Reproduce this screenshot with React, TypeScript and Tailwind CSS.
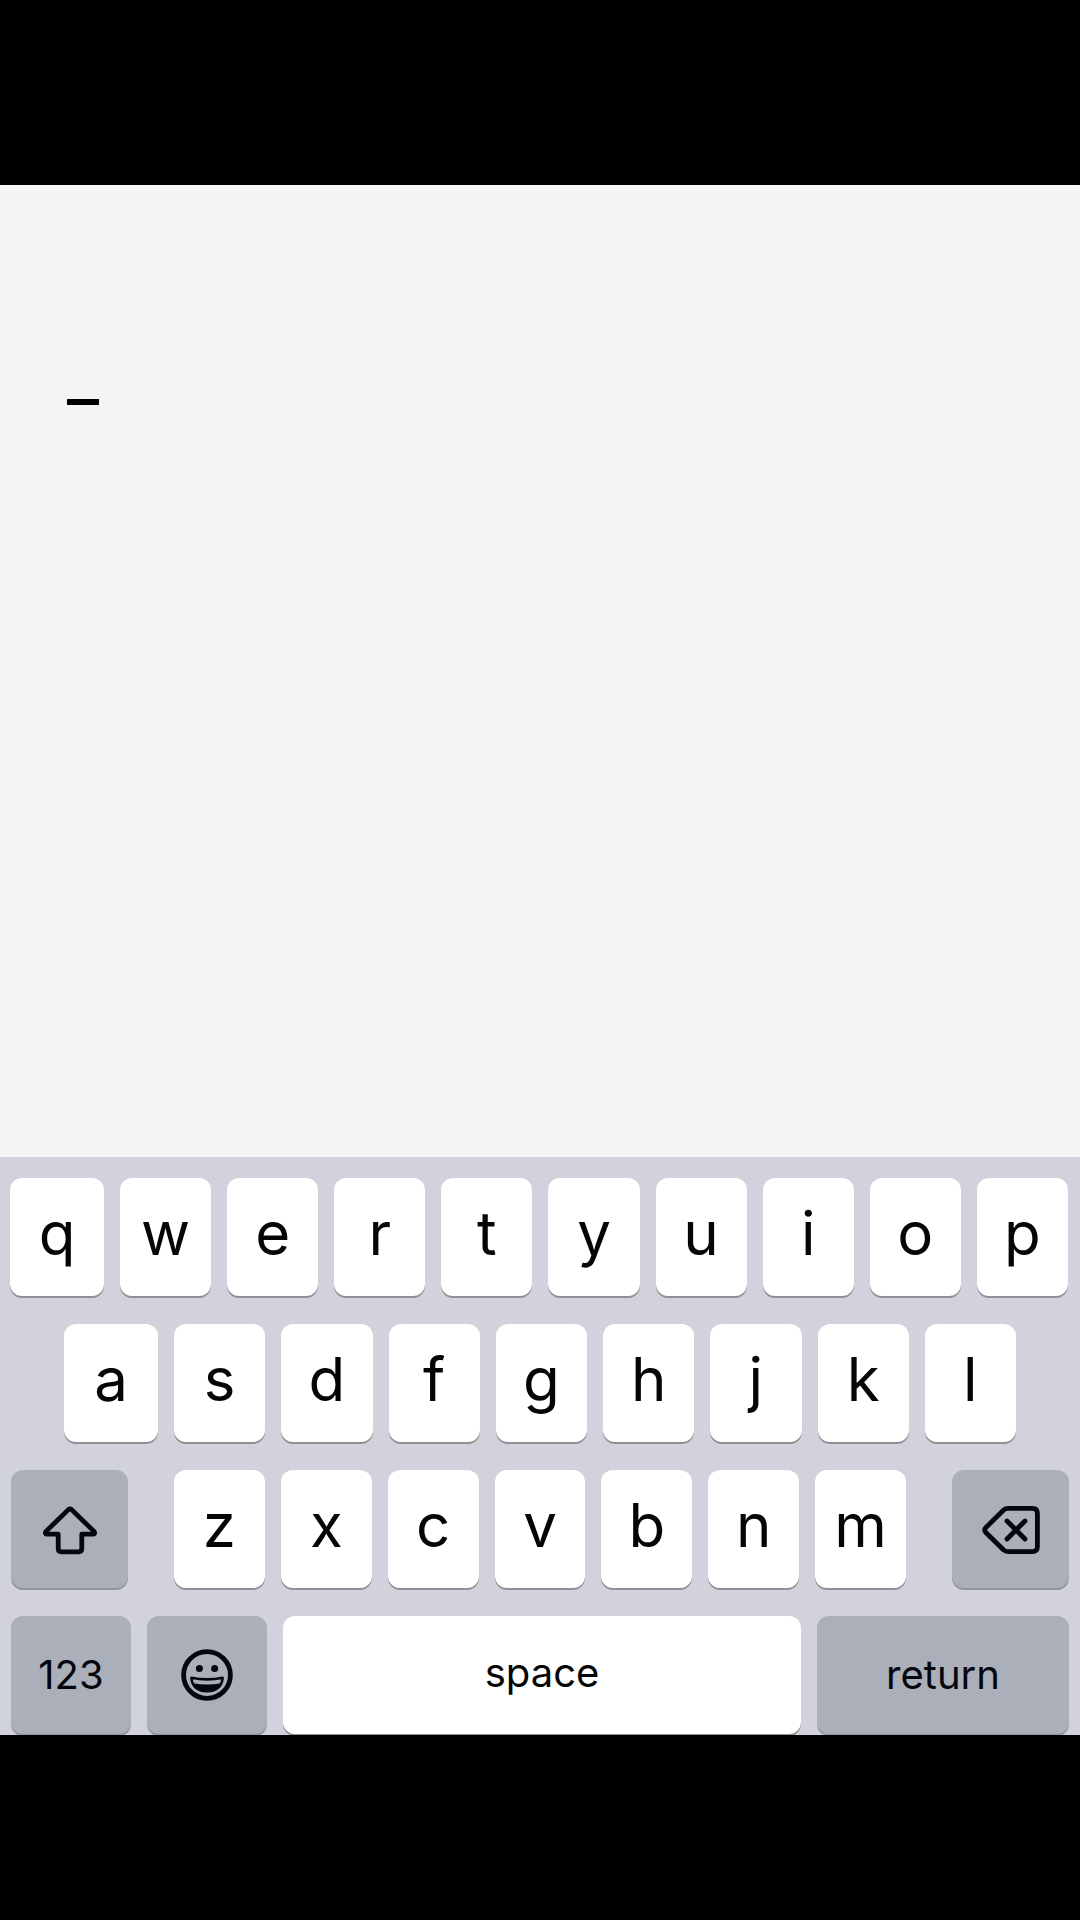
import type { ReactNode } from "react";
import { clsx } from "clsx";

const ROW_ONE = ["q", "w", "e", "r", "t", "y", "u", "i", "o", "p"];
const ROW_TWO = ["a", "s", "d", "f", "g", "h", "j", "k", "l"];
const ROW_THREE = ["z", "x", "c", "v", "b", "n", "m"];

const ShiftIcon = () => (
  <svg width="56" height="50" viewBox="0 0 56 50" fill="none" stroke="currentColor" strokeWidth="4.8" strokeLinejoin="round">
    <path d="M26.4 4.6Q28 3.2 29.6 4.600L52 26.400Q53.600 28.900 51 29.200H39.800V43.600Q39.800 46.800 36.600 46.800H19.400Q16.200 46.800 16.200 43.600V29.200H5Q2.400 28.900 4 26.400Z" />
  </svg>
);

const DeleteIcon = () => (
  <svg width="58" height="48" viewBox="0 0 58 48" fill="none" stroke="currentColor" strokeWidth="4.8" strokeLinecap="round" strokeLinejoin="round">
    <path d="M26 2.4H50.4Q55.4 2.4 55.4 7.4V40.6Q55.4 45.6 50.4 45.6H26Q23.4 45.6 21.4 43.8L3.6 26.2Q1.8 24 3.6 21.8L21.4 4.2Q23.4 2.4 26 2.4Z" />
    <path d="M25 15 43 33M43 15 25 33" />
  </svg>
);

const EmojiIcon = () => (
  <svg width="54" height="54" viewBox="0 0 54 54" fill="none" stroke="currentColor">
    <circle cx="27" cy="27" r="23.4" strokeWidth="4.8" />
    <circle cx="19.4" cy="20.6" r="3.5" fill="currentColor" stroke="none" />
    <circle cx="34.6" cy="20.6" r="3.5" fill="currentColor" stroke="none" />
    <path d="M11.4 29.8Q27 33 42.6 29.8C42 39 35.4 43.2 27 43.2S12 39 11.4 29.8Z" strokeWidth="2.6" strokeLinejoin="round" />
    <path d="M13 35.2Q27 38 41 35.2C38.4 41 33.4 43.6 27 43.6S15.6 41 13 35.2Z" fill="currentColor" stroke="none" />
  </svg>
);

type KeyProps = {
  children: ReactNode;
  className?: string;
  label?: string;
  special?: boolean;
};

const Key = ({ children, className, label, special }: KeyProps) => (
  <button
    type="button"
    aria-label={label}
    className={clsx(
      "flex h-full items-center justify-center rounded-xl",
      special
        ? "bg-[#abafba] text-[#05070f] shadow-[0_2px_0_#92949e]"
        : "bg-white text-[#050505] shadow-[0_2px_0_#8f8f94]",
      className
    )}
  >
    {children}
  </button>
);

const Letters = ({ letters, wideFirst }: { letters: string[]; wideFirst?: boolean }) => (
  <div className="flex h-full flex-1 gap-4">
    {letters.map((letter, i) => (
      <Key
        key={letter}
        className={clsx("pb-2 text-[60px] leading-none", wideFirst && i === 0 ? "w-[94px] shrink-0" : "min-w-0 flex-1 basis-0")}
      >
        {letter}
      </Key>
    ))}
  </div>
);

const Keyboard = () => (
  <div className="flex flex-col gap-7 overflow-hidden bg-[#d2d2dc] pt-[21px] pb-px">
    <div className="flex h-[118px] pr-[12px] pl-[10px]">
      <Letters letters={ROW_ONE} wideFirst />
    </div>
    <div className="flex h-[118px] px-16">
      <Letters letters={ROW_TWO} wideFirst />
    </div>
    <div className="flex h-[118px] gap-[46px] px-[11px]">
      <Key special label="Shift" className="w-[117px] shrink-0 pt-0.5">
        <ShiftIcon />
      </Key>
      <Letters letters={ROW_THREE} />
      <Key special label="Delete" className="w-[117px] shrink-0 pt-0.5">
        <DeleteIcon />
      </Key>
    </div>
    <div className="flex h-[118px] gap-4 px-[11px] text-[40px] leading-none">
      <Key special className="w-[120px] shrink-0">
        123
      </Key>
      <Key special label="Emoji" className="w-[120px] shrink-0">
        <EmojiIcon />
      </Key>
      <Key className="flex-1 pb-1">space</Key>
      <Key special className="w-[252px] shrink-0">
        return
      </Key>
    </div>
  </div>
);

export default function App() {
  return (
    <div className="flex min-h-screen flex-col bg-black py-[185px] font-['Inter',sans-serif]">
      <main className="flex flex-1 flex-col border-t-2 border-[#faf9fa] bg-[#f4f4f4] px-[67px] pt-[212px]">
        <span className="h-[6px] w-8 bg-black" />
        <textarea aria-label="Note" className="w-full flex-1 resize-none bg-transparent text-[40px] outline-none" />
      </main>
      <Keyboard />
    </div>
  );
}
